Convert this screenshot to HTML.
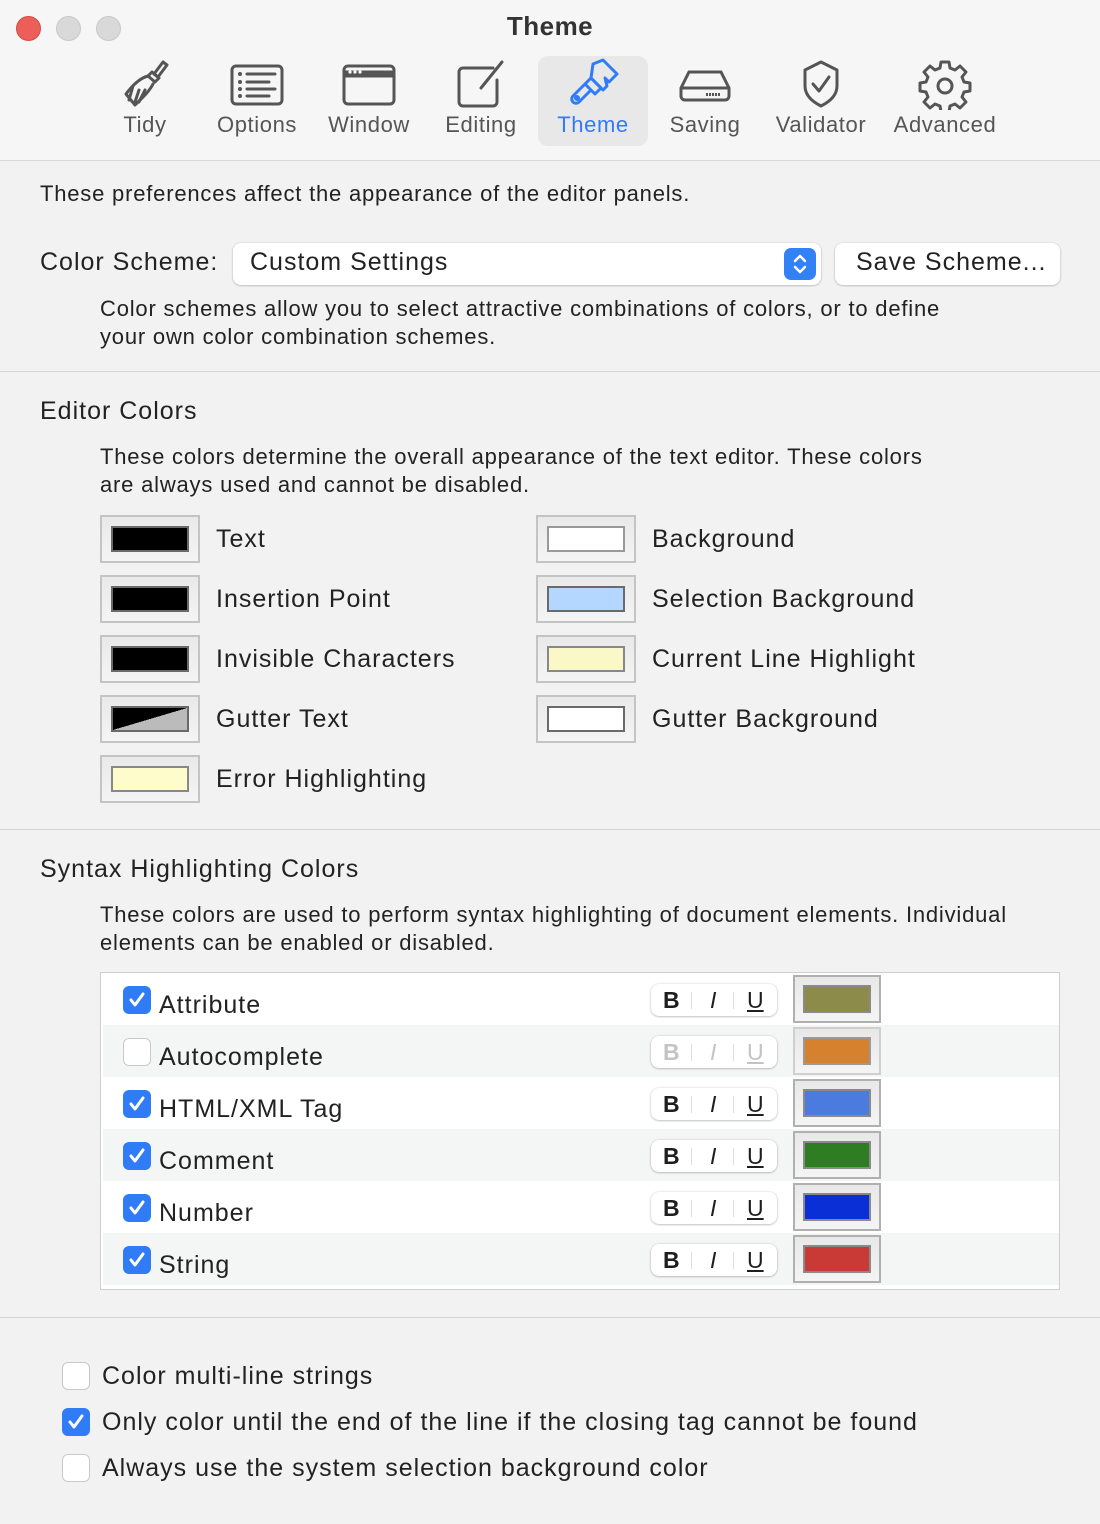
<!DOCTYPE html>
<html><head><meta charset="utf-8"><style>
*{box-sizing:border-box;margin:0;padding:0}
body{width:1100px;height:1524px;background:#f2f2f2;font-family:"Liberation Sans",Helvetica,Arial,sans-serif;color:#262626;position:relative;overflow:hidden}
.a{position:absolute;white-space:nowrap}
.top{position:absolute;left:0;top:0;width:1100px;height:161px;background:#f6f6f6;border-bottom:1px solid #d8d8d8}
.tl{position:absolute;top:16px;width:25px;height:25px;border-radius:50%;background:#d9d9d9;border:1px solid #c8c8c8}
.tb{position:absolute;top:56px;height:90px;width:110px;text-align:center}
.tb svg{position:absolute;left:50%;transform:translateX(-50%);top:2px}
.tb span{position:absolute;left:-20px;right:-20px;top:56px;font-size:22px;letter-spacing:0.6px;color:#555}
.sep{position:absolute;left:0;width:1100px;height:1px;background:#d6d6d6}
.t20{font-size:22px;letter-spacing:0.8px;color:#222}
.t24{font-size:25px;letter-spacing:1px;color:#222}
.well{position:absolute;width:100px;height:48px;background:linear-gradient(#e9e9e9,#f4f4f4);border:2px solid #c4c4c4}
.well i{position:absolute;left:9px;top:9px;right:9px;bottom:9px;border:2px solid #6a6a6a}
.row{position:absolute;left:2px;width:956px;height:52px}
.cb{position:absolute;width:28px;height:28px;border-radius:6px;background:#2f7cf6}
.cb svg{position:absolute;left:4px;top:4px}
.ucb{position:absolute;width:28px;height:28px;border-radius:6px;background:#fff;border:1px solid #c9c9c9}
.biu{position:absolute;left:548px;top:11px;width:126px;height:32px;background:#fff;border-radius:8px;box-shadow:0 0.5px 2px rgba(0,0,0,.35);font-size:23px;color:#1f1f1f}
.biu b,.biu em,.biu u{position:absolute;top:3px}
.biu .d{position:absolute;top:8px;width:1px;height:17px;background:#ddd}
.sw{position:absolute;left:690px;top:2px;width:88px;height:48px;background:linear-gradient(#e8e8e8,#f4f4f4);border:2px solid #b0b0b0}
.sw i{position:absolute;left:8px;top:8px;right:8px;bottom:8px;border:2px solid #8a8a8a}
</style></head><body>
<div class="top"></div>
<div class="tl" style="left:16px;background:#ec5f58;border-color:#d24c45"></div>
<div class="tl" style="left:56px"></div>
<div class="tl" style="left:96px"></div>
<div class="a" style="left:0;width:1100px;text-align:center;top:11px;font-size:26px;letter-spacing:0.5px;font-weight:bold;color:#333">Theme</div>

<div class="tb" style="left:90px"><svg width="56" height="52" viewBox="0 0 56 52" fill="none" stroke="#555" stroke-width="3" stroke-linejoin="round" stroke-linecap="round"><path d="M46 4 l4 3 -9 12 -4-3z"/><path d="M35 14l7 6-4 4-7-6z"/><path d="M31 18c-8 2-16 10-22 18l9 11c6-6 14-13 18-21"/><path d="M16 28l-4 14M22 32l-4 12M28 32l-6 12"/></svg><span>Tidy</span></div>
<div class="tb" style="left:202px"><svg width="56" height="48" viewBox="0 0 56 48" fill="none" stroke="#555" stroke-width="3"><rect x="3" y="8" width="50" height="38" rx="4"/><g stroke-linecap="round"><path d="M18 16h28M18 24h22M18 31h28M18 38h22"/></g><g fill="#555" stroke="none"><circle cx="11" cy="16" r="2"/><circle cx="11" cy="24" r="2"/><circle cx="11" cy="31" r="2"/><circle cx="11" cy="38" r="2"/></g></svg><span>Options</span></div>
<div class="tb" style="left:314px"><svg width="56" height="48" viewBox="0 0 56 48" fill="none" stroke="#555" stroke-width="3"><rect x="3" y="8" width="50" height="38" rx="4"/><path d="M3 16h50" stroke-width="7"/><g fill="#fff" stroke="none"><circle cx="9" cy="14" r="1.6"/><circle cx="14" cy="14" r="1.6"/><circle cx="19" cy="14" r="1.6"/></g></svg><span>Window</span></div>
<div class="tb" style="left:426px"><svg width="56" height="52" viewBox="0 0 56 52" fill="none" stroke="#555" stroke-width="3" stroke-linecap="round"><path d="M40 10H10a4 4 0 0 0-4 4v30a4 4 0 0 0 4 4h30a4 4 0 0 0 4-4V22"/><path d="M49 4L28 30"/></svg><span>Editing</span></div>
<div class="tb" style="left:538px;background:#e8e8e8;border-radius:10px"><svg width="56" height="52" viewBox="0 0 56 52" fill="none" stroke="#2f7cf6" stroke-width="3" stroke-linejoin="round"><path d="M28 6l10-4 14 14-8 8-4-4 2 8-4 4-12-12z"/><path d="M26 20l10 10-6 6-10-10z"/><path d="M20 26l-12 12a4 4 0 0 0 6 6l12-12"/><circle cx="12" cy="40" r="1.5" fill="#2f7cf6"/></svg><span style="color:#2f7cf6">Theme</span></div>
<div class="tb" style="left:650px"><svg width="56" height="48" viewBox="0 0 56 48" fill="none" stroke="#555" stroke-width="3"><path d="M4 30L12 14h32l8 16v8a4 4 0 0 1-4 4H8a4 4 0 0 1-4-4z"/><path d="M4 30h48"/><path d="M36 35v3M39 35v3M42 35v3M33 35v3M30 35v3" stroke-width="2"/></svg><span>Saving</span></div>
<div class="tb" style="left:766px"><svg width="56" height="52" viewBox="0 0 56 52" fill="none" stroke="#555" stroke-width="3" stroke-linejoin="round"><path d="M28 4l16 8v16c0 10-8 16-16 20-8-4-16-10-16-20V12z"/><path d="M20 26l6 7 10-14" stroke-linecap="round"/></svg><span>Validator</span></div>
<div class="tb" style="left:890px"><svg width="56" height="52" viewBox="0 0 56 52" fill="none" stroke="#555" stroke-width="3" stroke-linejoin="round"><path d="M24 4h8l1 6 5 2 5-4 6 6-4 5 2 5 6 1v8l-6 1-2 5 4 5-6 6-5-4-5 2-1 6h-8l-1-6-5-2-5 4-6-6 4-5-2-5-6-1v-8l6-1 2-5-4-5 6-6 5 4 5-2z"/><circle cx="28" cy="28" r="7"/></svg><span>Advanced</span></div>

<div class="a t20" style="left:40px;top:181px">These preferences affect the appearance of the editor panels.</div>
<div class="a t24" style="left:40px;top:248px">Color Scheme:</div>
<div class="a" style="left:233px;top:243px;width:588px;height:42px;background:#fff;border-radius:8px;box-shadow:0 0.5px 2px rgba(0,0,0,.3)"><span class="a t24" style="left:17px;top:5px">Custom Settings</span><div class="a" style="left:551px;top:5px;width:32px;height:32px;border-radius:7px;background:#3381f7"><svg width="32" height="32" viewBox="0 0 32 32" fill="none" stroke="#fff" stroke-width="2.5" stroke-linecap="round" stroke-linejoin="round"><path d="M11 13l5-5 5 5M11 19l5 5 5-5"/></svg></div></div>
<div class="a" style="left:835px;top:243px;width:225px;height:42px;background:#fff;border-radius:8px;box-shadow:0 0.5px 2px rgba(0,0,0,.3)"><span class="a t24" style="left:21px;top:5px">Save Scheme...</span></div>
<div class="a t20" style="left:100px;top:295px;line-height:28px">Color schemes allow you to select attractive combinations of colors, or to define<br>your own color combination schemes.</div>
<div class="sep" style="top:371px"></div>

<div class="a t24" style="left:40px;top:397px">Editor Colors</div>
<div class="a t20" style="left:100px;top:443px;line-height:28px">These colors determine the overall appearance of the text editor. These colors<br>are always used and cannot be disabled.</div>

<div class="well" style="left:100px;top:515px"><i style="background:#000"></i></div><div class="a t24" style="left:216px;top:525px">Text</div>
<div class="well" style="left:100px;top:575px"><i style="background:#000"></i></div><div class="a t24" style="left:216px;top:585px">Insertion Point</div>
<div class="well" style="left:100px;top:635px"><i style="background:#000"></i></div><div class="a t24" style="left:216px;top:645px">Invisible Characters</div>
<div class="well" style="left:100px;top:695px"><i style="background:linear-gradient(to top left,#bbb 50%,#000 50%)"></i></div><div class="a t24" style="left:216px;top:705px">Gutter Text</div>
<div class="well" style="left:100px;top:755px"><i style="background:#fefccb;border-color:#888"></i></div><div class="a t24" style="left:216px;top:765px">Error Highlighting</div>
<div class="well" style="left:536px;top:515px"><i style="background:#fff;border-color:#999"></i></div><div class="a t24" style="left:652px;top:525px">Background</div>
<div class="well" style="left:536px;top:575px"><i style="background:#b3d7ff"></i></div><div class="a t24" style="left:652px;top:585px">Selection Background</div>
<div class="well" style="left:536px;top:635px"><i style="background:#fbf8c7;border-color:#888"></i></div><div class="a t24" style="left:652px;top:645px">Current Line Highlight</div>
<div class="well" style="left:536px;top:695px"><i style="background:#fff"></i></div><div class="a t24" style="left:652px;top:705px">Gutter Background</div>
<div class="sep" style="top:829px"></div>

<div class="a t24" style="left:40px;top:855px">Syntax Highlighting Colors</div>
<div class="a t20" style="left:100px;top:901px;line-height:28px">These colors are used to perform syntax highlighting of document elements. Individual<br>elements can be enabled or disabled.</div>

<div class="a" style="left:100px;top:972px;width:960px;height:318px;background:#fff;border:1px solid #cfcfcf">
<div class="row" style="top:0;background:#fff"><div class="cb" style="left:20px;top:13px"><svg width="20" height="20" viewBox="0 0 20 20" fill="none" stroke="#fff" stroke-width="3" stroke-linecap="round" stroke-linejoin="round"><path d="M4 10l4 5 8-11"/></svg></div><div class="a t24" style="left:56px;top:18px">Attribute</div><div class="biu"><b style="left:12px">B</b><div class="d" style="left:40px"></div><em style="left:59px">I</em><div class="d" style="left:82px"></div><u style="left:96px">U</u></div><div class="sw"><i style="background:#8d8b49"></i></div></div>
<div class="row" style="top:52px;background:#f4f5f5"><div class="ucb" style="left:20px;top:13px"></div><div class="a t24" style="left:56px;top:18px">Autocomplete</div><div class="biu" style="color:#c4c4c4"><b style="left:12px">B</b><div class="d" style="left:40px"></div><em style="left:59px">I</em><div class="d" style="left:82px"></div><u style="left:96px">U</u></div><div class="sw" style="border-color:#cfcfcf"><i style="background:#d5812e;border-color:#999"></i></div></div>
<div class="row" style="top:104px;background:#fff"><div class="cb" style="left:20px;top:13px"><svg width="20" height="20" viewBox="0 0 20 20" fill="none" stroke="#fff" stroke-width="3" stroke-linecap="round" stroke-linejoin="round"><path d="M4 10l4 5 8-11"/></svg></div><div class="a t24" style="left:56px;top:18px">HTML/XML Tag</div><div class="biu"><b style="left:12px">B</b><div class="d" style="left:40px"></div><em style="left:59px">I</em><div class="d" style="left:82px"></div><u style="left:96px">U</u></div><div class="sw"><i style="background:#4b7bde"></i></div></div>
<div class="row" style="top:156px;background:#f4f5f5"><div class="cb" style="left:20px;top:13px"><svg width="20" height="20" viewBox="0 0 20 20" fill="none" stroke="#fff" stroke-width="3" stroke-linecap="round" stroke-linejoin="round"><path d="M4 10l4 5 8-11"/></svg></div><div class="a t24" style="left:56px;top:18px">Comment</div><div class="biu"><b style="left:12px">B</b><div class="d" style="left:40px"></div><em style="left:59px">I</em><div class="d" style="left:82px"></div><u style="left:96px">U</u></div><div class="sw"><i style="background:#2f7d22"></i></div></div>
<div class="row" style="top:208px;background:#fff"><div class="cb" style="left:20px;top:13px"><svg width="20" height="20" viewBox="0 0 20 20" fill="none" stroke="#fff" stroke-width="3" stroke-linecap="round" stroke-linejoin="round"><path d="M4 10l4 5 8-11"/></svg></div><div class="a t24" style="left:56px;top:18px">Number</div><div class="biu"><b style="left:12px">B</b><div class="d" style="left:40px"></div><em style="left:59px">I</em><div class="d" style="left:82px"></div><u style="left:96px">U</u></div><div class="sw"><i style="background:#0a2fd6"></i></div></div>
<div class="row" style="top:260px;background:#f4f5f5"><div class="cb" style="left:20px;top:13px"><svg width="20" height="20" viewBox="0 0 20 20" fill="none" stroke="#fff" stroke-width="3" stroke-linecap="round" stroke-linejoin="round"><path d="M4 10l4 5 8-11"/></svg></div><div class="a t24" style="left:56px;top:18px">String</div><div class="biu"><b style="left:12px">B</b><div class="d" style="left:40px"></div><em style="left:59px">I</em><div class="d" style="left:82px"></div><u style="left:96px">U</u></div><div class="sw"><i style="background:#c93a37"></i></div></div>
</div>
<div class="sep" style="top:1317px"></div>

<div class="ucb" style="left:62px;top:1362px"></div><div class="a t24" style="left:102px;top:1362px">Color multi-line strings</div>
<div class="cb" style="left:62px;top:1408px"><svg width="20" height="20" viewBox="0 0 20 20" fill="none" stroke="#fff" stroke-width="3" stroke-linecap="round" stroke-linejoin="round"><path d="M4 10l4 5 8-11"/></svg></div><div class="a t24" style="left:102px;top:1408px">Only color until the end of the line if the closing tag cannot be found</div>
<div class="ucb" style="left:62px;top:1454px"></div><div class="a t24" style="left:102px;top:1454px">Always use the system selection background color</div>
</body></html>
